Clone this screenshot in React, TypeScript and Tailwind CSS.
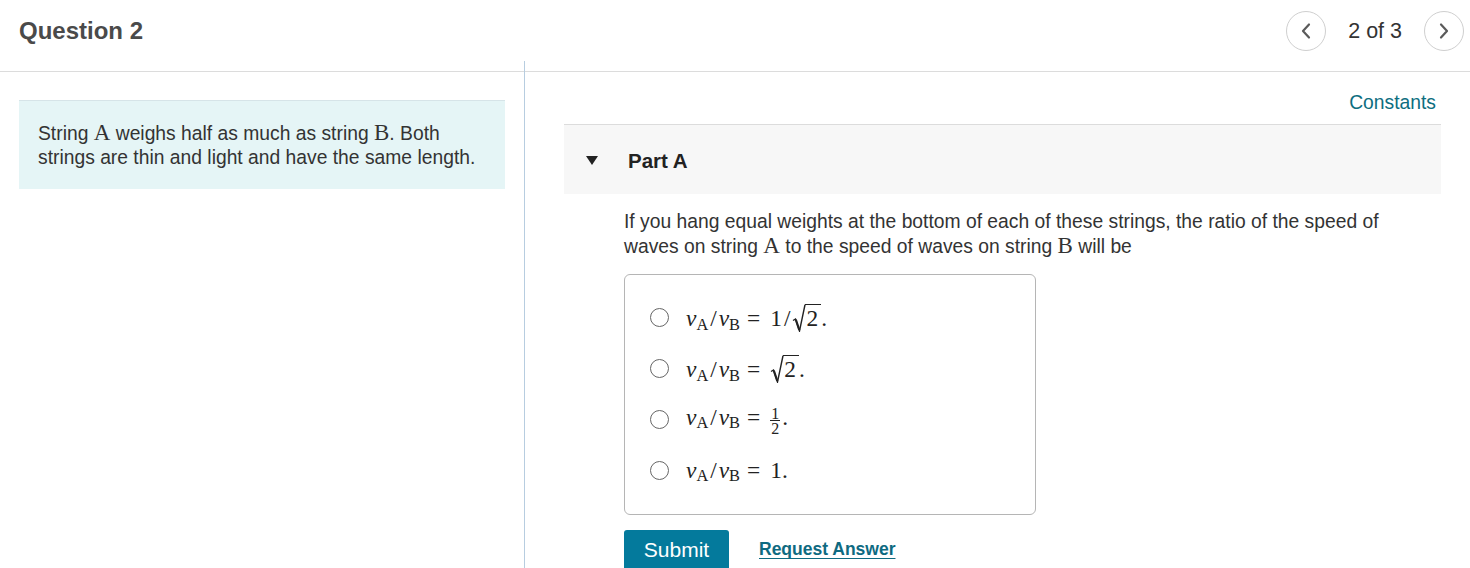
import React from 'react';

const serif = "font-['Liberation_Serif','Times_New_Roman',serif]";
const inlineVar = `${serif} text-[23px] leading-none`;

function Sub({ children }: { children: React.ReactNode }) {
  return <span className="text-[0.7em] relative top-[0.22em] not-italic">{children}</span>;
}

function V({ s }: { s: string }) {
  return (
    <span>
      <span className="italic">v</span>
      <Sub>{s}</Sub>
    </span>
  );
}

function Ratio() {
  return (
    <>
      <V s="A" />
      <span className="mx-[2px]">/</span>
      <V s="B" />
      <span className="ml-[7px] mr-[10px]">=</span>
    </>
  );
}

function Sqrt2() {
  return (
    <span className="relative inline-block pl-[13px]">
      <svg width="14" height="28" viewBox="0 0 14 28" className="absolute left-0 top-0" fill="none">
        <polyline points="1,16.5 3.5,15 7.5,27 13,0.75" stroke="#222" strokeWidth="1.4" strokeLinejoin="miter" />
        <line x1="3.8" y1="15.5" x2="7.3" y2="26" stroke="#222" strokeWidth="2.2" />
      </svg>
      <span className="inline-block border-t-[1.5px] border-[#222] leading-none pt-[2px] pl-[1px] pr-[3px]">2</span>
    </span>
  );
}

const options: React.ReactNode[] = [
  <>
    <Ratio />1<span className="mx-[2px]">/</span>
    <Sqrt2 />.
  </>,
  <>
    <Ratio />
    <Sqrt2 />.
  </>,
  <>
    <Ratio />
    <span className="inline-flex flex-col items-center align-middle text-[16px] leading-[13px] relative top-[1px]">
      <span>1</span>
      <span className="border-t border-[#222] px-[1px] pt-[1px]">2</span>
    </span>
    <span className="ml-[2px]">.</span>
  </>,
  <>
    <Ratio />1.
  </>,
];

export default function App() {
  return (
    <div className="w-[1470px] h-[568px] overflow-hidden bg-white font-['Liberation_Sans',Arial,sans-serif] text-[#333]">
      <header className="h-[72px] border-b border-[#dcdcdc] flex items-center justify-between pl-[19px] pr-[6px] pb-[9px]">
        <h1 className="text-[24px] leading-[32px] font-bold text-[#4a4a4a]">Question 2</h1>
        <div className="flex items-center gap-[22px]">
          <button className="w-[40px] h-[40px] rounded-full border border-[#cfcfcf] flex items-center justify-center">
            <svg width="12" height="18" viewBox="0 0 12 18" fill="none">
              <polyline points="9,2.5 3,9 9,15.5" stroke="#5a5a5a" strokeWidth="2.2" strokeLinecap="round" strokeLinejoin="round" />
            </svg>
          </button>
          <span className="text-[21.5px] text-[#333]">2 of 3</span>
          <button className="w-[40px] h-[40px] rounded-full border border-[#cfcfcf] flex items-center justify-center">
            <svg width="12" height="18" viewBox="0 0 12 18" fill="none">
              <polyline points="3,2.5 9,9 3,15.5" stroke="#5a5a5a" strokeWidth="2.2" strokeLinecap="round" strokeLinejoin="round" />
            </svg>
          </button>
        </div>
      </header>

      <div className="flex -mt-[11px]">
        <aside className="w-[525px] shrink-0 border-r border-[#b7cde0] h-[520px] pt-[39px] pl-[19px] pr-[19px]">
          <div className="bg-[#e5f5f6] border-t border-[#d6e4e8] pl-[19px] pr-[10px] pt-[20px] pb-[19px] text-[19.3px] leading-[24px]">
            String <span className={inlineVar}>A</span> weighs half as much as string{' '}
            <span className={inlineVar}>B</span>. Both strings are thin and light and have the same length.
          </div>
        </aside>

        <main className="flex-1 pt-[30px] pl-[39px] pr-[29px]">
          <div className="flex justify-end pr-[5px] mb-[9px]">
            <a className="text-[19.3px] leading-[24px] text-[#0e6e80]">Constants</a>
          </div>
          <div className="h-[70px] bg-[#f7f7f7] border-t border-[#dcdcdc] flex items-center pl-[22px] pt-[3px]">
            <svg width="12" height="9" viewBox="0 0 12 9" className="mt-[-1px]">
              <polygon points="0,0 12,0 6,9" fill="#222" />
            </svg>
            <span className="ml-[30px] text-[20.5px] font-bold text-[#222]">Part A</span>
          </div>

          <div className="pl-[60px] pt-[16px]">
            <p className="text-[19.3px] leading-[24px] text-[#333] w-[780px]">
              If you hang equal weights at the bottom of each of these strings, the ratio of the speed of waves on string{' '}
              <span className={inlineVar}>A</span> to the speed of waves on string <span className={inlineVar}>B</span> will
              be
            </p>

            <div className="mt-[15px] w-[412px] h-[241px] border border-[#b5b5b5] rounded-[6px] pl-[25px] pt-[17px]">
              {options.map((opt, i) => (
                <label key={i} className="h-[51px] flex items-center">
                  <span className="w-[19px] h-[19px] rounded-full border border-[#666] shrink-0" />
                  <span className={`${serif} ml-[17px] text-[23.4px] leading-none text-[#222] whitespace-nowrap`}>{opt}</span>
                </label>
              ))}
            </div>

            <div className="mt-[15px] flex items-center gap-[30px]">
              <button className="w-[105px] h-[42px] bg-[#047a9c] text-white text-[21px] rounded-t-[3px] pb-[2px]">
                Submit
              </button>
              <a className="text-[17.5px] font-bold text-[#0e6a81] underline underline-offset-[3px] pb-[3px]">
                Request Answer
              </a>
            </div>
          </div>
        </main>
      </div>
    </div>
  );
}
